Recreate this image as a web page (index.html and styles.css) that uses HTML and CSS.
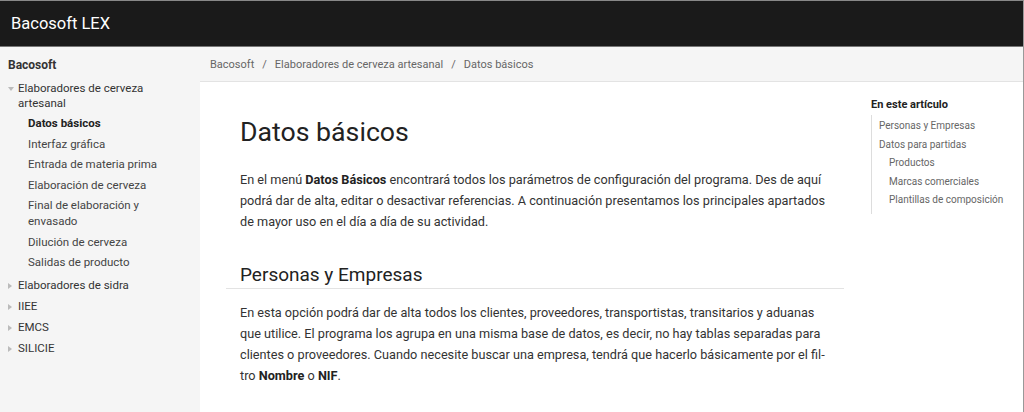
FILE: index.html
```html
<!DOCTYPE html>
<html lang="es">
<head>
    <meta charset="UTF-8">
    <meta name="viewport" content="width=device-width, initial-scale=1.0">
    <title>Datos básicos - Bacosoft LEX</title>
    <link rel="stylesheet" href="styles.css">
</head>
<body>
    <div class="page">
        <header class="topbar">
            <a class="brand" href="#">Bacosoft LEX</a>
        </header>

        <div class="layout">
            <!-- Menú lateral -->
            <nav class="sidebar">
                <div class="sidebar-title">Bacosoft</div>
                <ul class="tree">
                    <li class="node open">
                        <span class="caret"></span>
                        <span class="node-label">Elaboradores de cerveza artesanal</span>
                        <ul class="subtree">
                            <li class="active">Datos básicos</li>
                            <li>Interfaz gráfica</li>
                            <li>Entrada de materia prima</li>
                            <li>Elaboración de cerveza</li>
                            <li>Final de elaboración y envasado</li>
                            <li>Dilución de cerveza</li>
                            <li>Salidas de producto</li>
                        </ul>
                    </li>
                    <li class="node"><span class="caret"></span><span class="node-label">Elaboradores de sidra</span></li>
                    <li class="node"><span class="caret"></span><span class="node-label">IIEE</span></li>
                    <li class="node"><span class="caret"></span><span class="node-label">EMCS</span></li>
                    <li class="node"><span class="caret"></span><span class="node-label">SILICIE</span></li>
                </ul>
            </nav>

            <main class="main">
                <div class="breadcrumb">
                    <span>Bacosoft</span>
                    <span class="sep">/</span>
                    <span>Elaboradores de cerveza artesanal</span>
                    <span class="sep">/</span>
                    <span>Datos básicos</span>
                </div>

                <div class="content">
                    <article class="article">
                        <h1>Datos básicos</h1>
                        <p>En el menú <strong>Datos Básicos</strong> encontrará todos los parámetros de configuración del programa. Des de aquí podrá dar de alta, editar o desactivar referencias. A continuación presentamos los principales apartados de mayor uso en el día a día de su actividad.</p>

                        <h2>Personas y Empresas</h2>
                        <p>En esta opción podrá dar de alta todos los clientes, proveedores, transportistas, transitarios y aduanas que utilice. El programa los agrupa en una misma base de datos, es decir, no hay tablas separadas para clientes o proveedores. Cuando necesite buscar una empresa, tendrá que hacerlo básicamente por el fil&shy;tro <strong>Nombre</strong> o <strong>NIF</strong>.</p>
                    </article>

                    <aside class="toc">
                        <div class="toc-title">En este artículo</div>
                        <ul class="toc-list">
                            <li>Personas y Empresas</li>
                            <li>Datos para partidas</li>
                            <li class="sub">Productos</li>
                            <li class="sub">Marcas comerciales</li>
                            <li class="sub">Plantillas de composición</li>
                        </ul>
                    </aside>
                </div>
            </main>
        </div>
    </div>
</body>
</html>
```

FILE: styles.css
```css
* {
    box-sizing: border-box;
}

body {
    margin: 0;
    font-family: Roboto, "Liberation Sans", Arial, sans-serif;
    color: #333;
    background: #fff;
}

ul {
    list-style: none;
    margin: 0;
    padding: 0;
}

.page {
    height: 412px;
    overflow: hidden;
    border-top: 1px solid #888;
    border-right: 1px solid #999;
}

/* Barra superior */
.topbar {
    height: 46px;
    background: #1a1a1a;
    border-bottom: 1px solid #777;
    display: flex;
    align-items: center;
    padding-left: 11px;
}

.brand {
    color: #fff;
    font-size: 16.5px;
    text-decoration: none;
}

.layout {
    display: grid;
    grid-template-columns: 200px 1fr;
    height: 100%;
}

/* Menú lateral */
.sidebar {
    background: #f5f5f5;
    padding: 10px 25px 0 8px;
    font-size: 11.5px;
    line-height: 16px;
}

.sidebar-title {
    font-size: 12px;
    font-weight: bold;
    color: #333;
    margin-bottom: 4.5px;
}

.node {
    position: relative;
    padding: 3px 0 3px 10px;
    color: #333;
}

.node.open {
    padding-bottom: 2px;
}

.caret {
    position: absolute;
    left: 0;
    top: 8.5px;
    width: 0;
    height: 0;
    border-top: 3px solid transparent;
    border-bottom: 3px solid transparent;
    border-left: 4px solid #bbb;
}

.node.open > .caret {
    top: 9px;
    border-left: 3px solid transparent;
    border-right: 3px solid transparent;
    border-top: 4px solid #bbb;
    border-bottom: 0;
}

.node-label {
    display: block;
    line-height: 15px;
}

.subtree {
    padding-left: 10px;
    margin-top: 2.5px;
}

.subtree li {
    padding: 2.25px 0;
    color: #444;
}

.subtree li.active {
    font-weight: bold;
    color: #222;
}

/* Contenido principal */
.main {
    background: #fff;
}

.breadcrumb {
    height: 35px;
    background: #f5f5f5;
    border-bottom: 1px solid #e3e3e3;
    padding-left: 10px;
    display: flex;
    align-items: center;
    gap: 8px;
    font-size: 11px;
    color: #666;
}

.content {
    display: flex;
    align-items: flex-start;
}

.article {
    width: 590px;
    margin-left: 40px;
}

.article h1 {
    font-size: 26.7px;
    font-weight: 400;
    color: #222;
    margin: 33px 0 20px 0;
    line-height: 34px;
}

.article p {
    font-size: 12.7px;
    line-height: 21px;
    margin: 0;
}

.article strong {
    font-weight: bold;
    color: #222;
}

.article h2 {
    font-size: 19px;
    font-weight: 400;
    color: #222;
    margin: 31px -14px 13px -14px;
    padding: 0 14px 2px 14px;
    border-bottom: 1px solid #e3e3e3;
}

/* Índice del artículo */
.toc {
    margin-left: 41px;
    margin-top: 16px;
    font-size: 10px;
}

.toc-title {
    font-size: 11px;
    font-weight: bold;
    color: #222;
    margin-bottom: 4px;
}

.toc-list {
    border-left: 1px solid #ddd;
    padding: 2px 0 4px 7px;
}

.toc-list li {
    color: #666;
    line-height: 18.5px;
}

.toc-list li.sub {
    padding-left: 10px;
}
```
